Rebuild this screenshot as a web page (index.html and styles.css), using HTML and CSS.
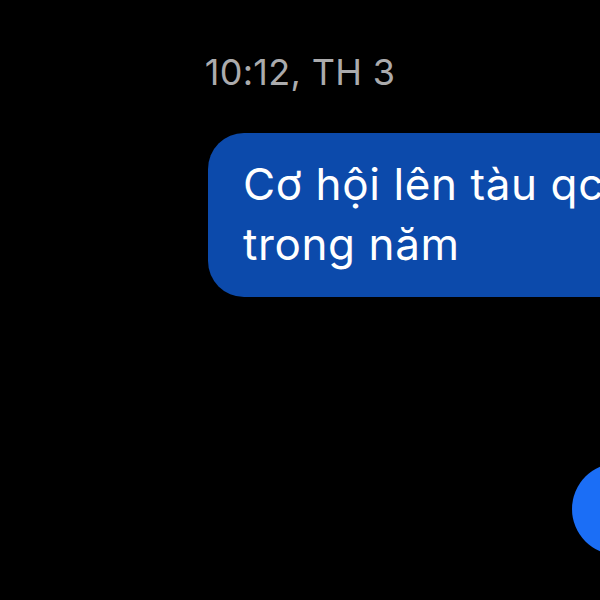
FILE: index.html
```html
<!DOCTYPE html>
<html lang="vi">
<head>
    <meta charset="UTF-8">
    <meta name="viewport" content="width=device-width, initial-scale=1.0">
    <title>Tin nhắn</title>
    <link rel="stylesheet" href="styles.css">
</head>
<body>
    <div class="chat">
        <div class="timestamp">10:12, TH 3</div>
        <div class="message-row">
            <div class="bubble">Cơ hội lên tàu qc<br>trong năm</div>
        </div>
        <div class="fab-row">
            <div class="fab"></div>
        </div>
    </div>
</body>
</html>
```

FILE: styles.css
```css
body {
    margin: 0;
    padding: 0;
    background-color: #000;
    font-family: Inter, "Noto Sans", sans-serif;
    overflow: hidden;
}

.chat {
    width: 600px;
    height: 600px;
    overflow: hidden;
}

.timestamp {
    padding-top: 52px;
    text-align: center;
    color: #ababad;
    font-size: 36px;
    line-height: 40px;
    letter-spacing: 0.3px;
}

.message-row {
    margin-top: 41px;
    padding-left: 208px;
}

.bubble {
    width: 480px;
    height: 164px;
    box-sizing: border-box;
    padding: 21px 0 0 35px;
    background-color: #0c4aab;
    border-radius: 36px 0 0 36px;
    color: #fff;
    font-size: 44px;
    line-height: 60px;
    letter-spacing: 0.6px;
    white-space: nowrap;
    overflow: hidden;
}

.fab-row {
    margin-top: 166px;
    padding-left: 572px;
}

.fab {
    width: 92px;
    height: 92px;
    border-radius: 50%;
    background-color: #1b6ef6;
}
```
